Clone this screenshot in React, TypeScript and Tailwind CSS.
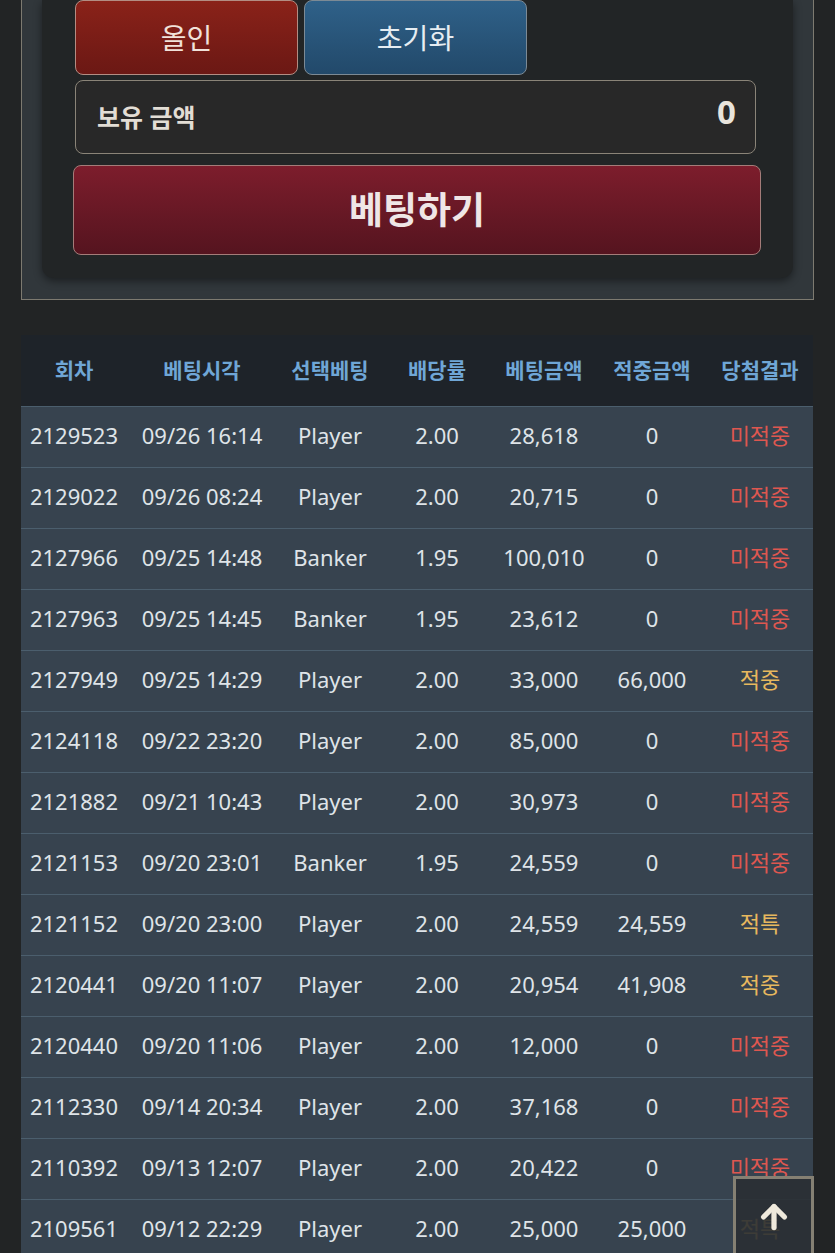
import React from "react";
import { ArrowUp } from "lucide-react";

type Bet = {
  round: string;
  time: string;
  pick: string;
  odds: string;
  amount: string;
  win: string;
  result: "미적중" | "적중" | "적특";
};

const bets: Bet[] = [
  { round: "2129523", time: "09/26 16:14", pick: "Player", odds: "2.00", amount: "28,618", win: "0", result: "미적중" },
  { round: "2129022", time: "09/26 08:24", pick: "Player", odds: "2.00", amount: "20,715", win: "0", result: "미적중" },
  { round: "2127966", time: "09/25 14:48", pick: "Banker", odds: "1.95", amount: "100,010", win: "0", result: "미적중" },
  { round: "2127963", time: "09/25 14:45", pick: "Banker", odds: "1.95", amount: "23,612", win: "0", result: "미적중" },
  { round: "2127949", time: "09/25 14:29", pick: "Player", odds: "2.00", amount: "33,000", win: "66,000", result: "적중" },
  { round: "2124118", time: "09/22 23:20", pick: "Player", odds: "2.00", amount: "85,000", win: "0", result: "미적중" },
  { round: "2121882", time: "09/21 10:43", pick: "Player", odds: "2.00", amount: "30,973", win: "0", result: "미적중" },
  { round: "2121153", time: "09/20 23:01", pick: "Banker", odds: "1.95", amount: "24,559", win: "0", result: "미적중" },
  { round: "2121152", time: "09/20 23:00", pick: "Player", odds: "2.00", amount: "24,559", win: "24,559", result: "적특" },
  { round: "2120441", time: "09/20 11:07", pick: "Player", odds: "2.00", amount: "20,954", win: "41,908", result: "적중" },
  { round: "2120440", time: "09/20 11:06", pick: "Player", odds: "2.00", amount: "12,000", win: "0", result: "미적중" },
  { round: "2112330", time: "09/14 20:34", pick: "Player", odds: "2.00", amount: "37,168", win: "0", result: "미적중" },
  { round: "2110392", time: "09/13 12:07", pick: "Player", odds: "2.00", amount: "20,422", win: "0", result: "미적중" },
  { round: "2109561", time: "09/12 22:29", pick: "Player", odds: "2.00", amount: "25,000", win: "25,000", result: "적특" },
];

const headers = ["회차", "베팅시각", "선택베팅", "배당률", "베팅금액", "적중금액", "당첨결과"];

const cols = "grid grid-cols-[106px_150px_106px_108px_106px_110px_106px]";

const App: React.FC = () => {
  return (
    <div
      className="min-h-screen bg-[#222425] pb-10"
      style={{ fontFamily: '"Noto Sans", "Noto Sans CJK KR", sans-serif' }}
    >
      {/* Bet panel */}
      <div className="ml-[21px] w-[793px] border-x border-b border-[#7d7a70] bg-[#31373b] px-[20px] pb-[21px]">
        <div className="rounded-b-xl bg-[#222526] pl-[33px] pr-[37px] pb-[23px] shadow-[0_3px_8px_rgba(0,0,0,0.45)]">
          <div className="flex gap-[6px]">
            <button className="flex h-[75px] w-[223px] items-center justify-center rounded-lg border border-[#b38d83] bg-gradient-to-b from-[#8a2219] to-[#6b1814] text-[28px] text-[#f1e2da]">
              올인
            </button>
            <button className="flex h-[75px] w-[223px] items-center justify-center rounded-lg border border-[#7c8a95] bg-gradient-to-b from-[#2f6189] to-[#22496a] text-[28px] text-[#e6edf2]">
              초기화
            </button>
          </div>
          <div className="mt-[5px] flex h-[74px] items-center justify-between rounded-lg border border-[#8a8478] bg-[#282828] pl-[21px] pr-[19px]">
            <span className="mt-[2px] text-[25px] font-bold text-[#e2ddd5]">보유 금액</span>
            <span className="-mt-[10px] text-[33px] font-bold text-[#e8e4dc]">0</span>
          </div>
          <button className="-ml-[2px] mt-[11px] flex h-[90px] w-[688px] items-center justify-center rounded-lg border border-[#a47c79] bg-gradient-to-b from-[#7d1d2c] to-[#55141f] text-[37px] font-bold text-[#efe6e6]">
            베팅하기
          </button>
        </div>
      </div>

      {/* History table */}
      <div className="ml-[21px] mt-[35px] w-[792px]">
        <div className={`${cols} h-[71px] items-center bg-[#1e2329] text-center text-[21px] font-bold text-[#6fa6d6]`}>
          {headers.map((h) => (
            <div key={h}>{h}</div>
          ))}
        </div>
        {bets.map((b) => (
          <div
            key={b.round}
            className={`${cols} h-[61px] items-center border-t border-[#4b5e6d] bg-[#37434f] pb-[4px] text-center text-[22px] text-[#dfe4e8]`}
          >
            <div>{b.round}</div>
            <div>{b.time}</div>
            <div>{b.pick}</div>
            <div>{b.odds}</div>
            <div>{b.amount}</div>
            <div>{b.win}</div>
            <div className={b.result === "미적중" ? "text-[#de5750]" : "text-[#e7b85e]"}>
              {b.result}
            </div>
          </div>
        ))}
      </div>

      {/* Scroll to top */}
      <button className="fixed bottom-[-4px] right-[21px] flex h-[81px] w-[81px] items-center justify-center border-[3px] border-[#858073] bg-[#2a2f33]/90">
        <ArrowUp className="h-[36px] w-[36px] text-[#efe9dc]" strokeWidth={3.5} />
      </button>
    </div>
  );
};

export default App;
